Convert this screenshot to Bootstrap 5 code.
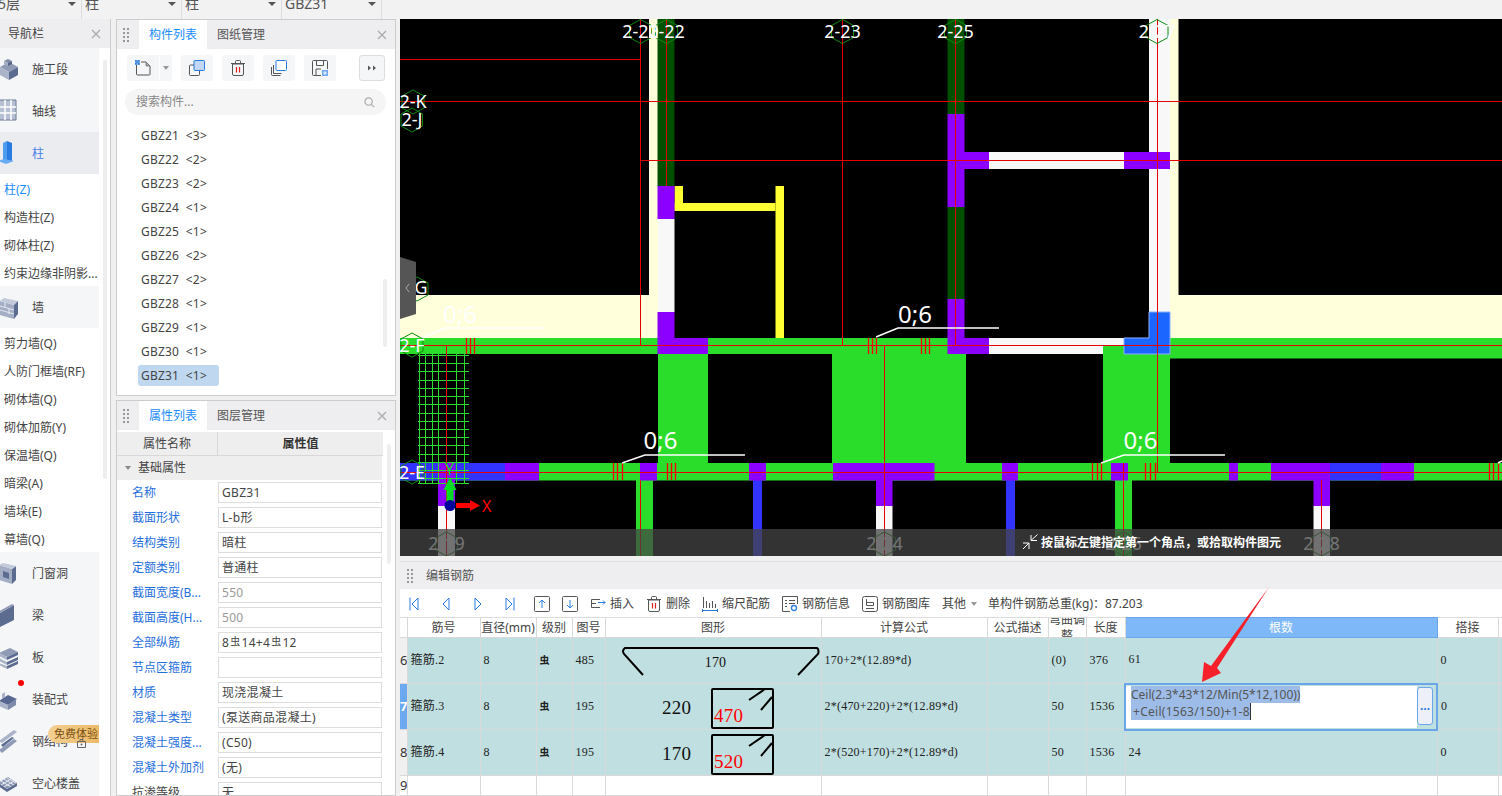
<!doctype html>
<html lang="zh">
<head>
<meta charset="utf-8">
<title>编辑钢筋</title>
<link href="https://cdn.jsdelivr.net/npm/bootstrap@5.3.0/dist/css/bootstrap.min.css" rel="stylesheet">
<style>
html,body{height:796px;overflow:hidden}
body{font-family:"Noto Sans","Noto Sans CJK SC",sans-serif;font-size:12px;color:#444;background:#f0f0f0;line-height:1.3}
.topstrip{height:19px;background:#f2f2f2;overflow:hidden}
.topcell{width:100px;height:19px;line-height:8px;font-size:14px;border-right:1px solid #ddd;padding-left:3px;position:relative;color:#555}
.topcell:first-child{width:82px;padding-left:0;text-indent:-2px}
.topcell::after{content:"";position:absolute;right:5px;top:2px;border:4px solid transparent;border-top:4px solid #555;border-bottom:0}
.mainrow{height:777px}
.navcol{width:112px;background:#fff;border-right:1px solid #ccc;overflow:hidden;position:relative}
.phead{height:29px;background:#eeeef0;flex:none}
.navhead{padding:0 9px 0 8px}
.navlist{width:99px;background:#f5f6f8}
.navrow{height:42px;background:#f5f6f8;color:#444;padding:2px 0 0 32px;position:relative}
.navrow svg{position:absolute;left:-2px;top:8px;width:24px;height:26px}
.navrow.picked{background:#ebecf0;color:#4a80e8}
.navsub{height:28px;padding:3px 0 0 4px;background:#fff;white-space:nowrap;overflow:hidden;color:#444}
.navsub.picked{color:#1a8cff}
.navthumb{position:absolute;left:103px;top:41px;width:4px;height:419px;background:#eee;border-radius:2px}
.reddot{position:absolute;left:18px;top:2px;width:6px;height:6px;border-radius:50%;background:#f00}
.trybadge{position:absolute;left:48px;top:5px;width:51px;height:18px;background:linear-gradient(90deg,#f3cf93,#ecbb68);color:#7a4e10;border-radius:9px 0 0 9px;line-height:18px;font-size:11px;text-align:right;white-space:nowrap;overflow:hidden;padding-right:1px}
.navrow svg.lockglyph{left:77px;top:19px;width:9px;height:9px}
.midcol{width:280px;margin-left:5px;flex:none}
.panelbox{background:#fff;border:1px solid #ccc;overflow:hidden}
.panel1{height:377px}
.panel2{height:396px;margin-top:4px}
.griphandle{width:6px;height:14px;margin:0 10px 0 6px;flex:none}
.ptab{height:29px;line-height:29px;padding:0 10px;color:#555;font-size:12px}
.ptab.picked{background:#fff;color:#1a8cff;width:68px;text-align:center;padding:0}
.xclose{width:10px;height:10px;flex:none}
.toolrow{padding:6px 0 0 10px;height:35px}
.tbtn{width:32px;height:26px;padding:0;background:#f5f6f8;border:0;border-radius:3px;margin-right:9px;display:flex;align-items:center;justify-content:center}
.tbtn svg{width:16px;height:16px}
.tbtn.first{border-radius:3px 0 0 3px;margin-right:1px}
.tbtn.drop{width:12px;border-radius:0 3px 3px 0}
.tbtn.more{width:26px;border:1px solid #ddd;margin-left:14px;margin-right:0}
.drop-tri{border:3px solid transparent;border-top:4px solid #999;border-bottom:0}
.searchbar{margin:5px 9px 0 8px;width:261px;height:26px;border-radius:13px;background:#f5f5f5;color:#888;padding:0 11px}
.searchbar svg{width:11px;height:11px}
.complist{padding-top:9px;margin-left:21px;width:81px}
.complist .list-group-item{height:24px;line-height:24px;padding:0 0 0 3px;background:transparent;border:0;color:#444;white-space:nowrap;letter-spacing:.2px}
.complist .list-group-item.picked{background:#bfd8f0;border-radius:3px;height:21px;line-height:21px;margin:1px 0 2px}
.midthumb{position:absolute;left:266px;top:259px;width:4px;height:68px;background:#eee;border-radius:2px}
.proptable{width:266px}
.prophead{height:24px;background:#eeeeee;border-bottom:1px solid #d8d8d8;margin-top:2px}
.prophead>div:first-child{width:101px;border-right:1px solid #d8d8d8;text-align:center;line-height:24px}
.prophead>div:last-child{flex:1;text-align:center;line-height:24px;color:#333;font-weight:600}
.propsect{height:24px;background:#eeeeee;padding-left:8px;line-height:24px;width:265px;gap:7px}
.sect-tri{border:3px solid transparent;border-top:4px solid #888;border-bottom:0}
.proprow{height:25px}
.proplabel{width:101px;padding-left:15px;color:#1f6fdc;white-space:nowrap;flex:none}
.proplabel.plain{color:#444}
.propval.form-control{width:164px;height:21px;min-height:21px;padding:0 3px;font-size:12px;line-height:19px;border:1px solid #ddd;border-radius:0;color:#444;letter-spacing:.3px;font-family:inherit;background:#fff}
.propval.dimmed{color:#999}
.gr{font-size:10px;position:relative;top:-2px;margin:0 1px}
.propthumb{position:absolute;left:270px;top:43px;width:4px;height:120px;background:#eee;border-radius:2px}
.rightcol{width:1102px;margin-left:4px;flex:none;position:relative}
.cadview{display:block;width:1102px;height:537px;background:#000}
.cadtext{font-family:"Noto Sans","Noto Sans CJK SC",sans-serif}
.editor{margin-top:5px;height:235px;background:#fff;border-top:1px solid #ddd;overflow:hidden}
.edhead{height:27px;background:#eeeef0;color:#555}
.edhead .griphandle{margin:0 13px 0 7px}
.edtools{height:28px;background:#fff;padding:1px 0 0 9px;white-space:nowrap;color:#444}
.eit{display:inline-flex;align-items:center;flex:none}
.eit svg{width:16px;height:16px;margin-right:4px;flex:none}
.nv{width:32px}.nv svg{width:10px;margin:0}
.nv:nth-child(4){width:29px}
.ud{width:28px}.ud svg{margin:0}
.act1{width:56px}.act2{width:56px}.act3{width:80px}.act4{width:80px}.act5{width:80px}
.act6{width:46px;gap:5px}
.mini-tri{border:3px solid transparent;border-top:4px solid #999;border-bottom:0}
.rebar.table{table-layout:fixed;width:1102px;margin:0;border-collapse:collapse;color:#222;font-size:12px;--bs-table-bg:transparent}
.rebar col:nth-child(1){width:7px}.rebar col:nth-child(2){width:73px}.rebar col:nth-child(3){width:56px}.rebar col:nth-child(4){width:36px}
.rebar col:nth-child(5){width:33px}.rebar col:nth-child(6){width:216px}.rebar col:nth-child(7){width:166px}.rebar col:nth-child(8){width:61px}
.rebar col:nth-child(9){width:38px}.rebar col:nth-child(10){width:39px}.rebar col:nth-child(11){width:312px}.rebar col:nth-child(12){width:61px}.rebar col:nth-child(13){width:4px}
.rebar.table>:not(caption)>*>*{padding:0;border:0;border-right:1px solid #d9d9d9;border-bottom:1px solid #d9d9d9;box-shadow:none;vertical-align:middle;overflow:hidden}
.rebar.table>thead>tr>th{height:20px;background:#fff;font-weight:400;text-align:center;color:#444;border-top:1px solid #ddd}
.hcut{height:19px;line-height:16px;display:flex;align-items:center;justify-content:center;overflow:hidden}
.rebar.table>thead>tr>th.colpick{background:#7eb8f8;color:#fff;border:1px solid #6aa6e8}
.rebar.table>tbody>tr>td{height:46px;background:#c0dfe0;padding-left:3px;font-family:"Liberation Serif","Noto Sans CJK SC",serif;white-space:nowrap;letter-spacing:.22px}
.rebar.table>tbody>tr>td.rhd{background:#f0f0f0;padding:0;font-size:13px;text-align:left;color:#333;font-family:"Noto Sans",sans-serif;letter-spacing:0}
.rebar.table>tbody>tr>td.rhd.picked{background:#6aa8f0;color:#fff;font-weight:700}
.rebar.table>tbody>tr.blank>td{height:20px;background:#fff}
.rebar.table>tbody>tr>td.shapecell{padding:0}
.shapecell svg{display:block;width:215px;height:45px}
.shapefont{font-family:"Liberation Serif",serif}
.gradeglyph{font-size:10px;font-weight:600}
.rebar.table>tbody>tr>td.editcell{padding:0;position:relative;border:2px solid #6aa6e8}
.editbox{position:relative;height:42px;background:#fff;margin-right:19px;padding:0 0 0 5px;font-family:"Noto Sans",sans-serif;color:#555;line-height:17px;white-space:nowrap;letter-spacing:0}
.sel{background:#9dbde8}
.lineb{padding-left:2px;letter-spacing:.28px}
.caretbar{border-right:1px solid #333}
.dotbtn{position:absolute;right:3px;top:2px;width:16px;height:38px;background:#edf0f8;border:1px solid #6aa6e8;border-radius:3px;color:#2a7be0;font-weight:700;line-height:32px;text-align:center;padding:0;font-size:12px;font-family:"Noto Sans",sans-serif}
.redarrow{position:absolute;left:0;top:0;width:1102px;height:777px;pointer-events:none}
</style>
</head>
<body>
<div class="topstrip d-flex">
  <div class="topcell">5层</div><div class="topcell">柱</div><div class="topcell">柱</div><div class="topcell">GBZ31</div>
</div>
<div class="mainrow d-flex">
  <aside class="navcol">
    <div class="phead navhead d-flex align-items-center justify-content-between"><span>导航栏</span>
      <svg class="xclose" viewBox="0 0 10 10"><path d="M1 1l8 8M9 1l-8 8" stroke="#aaa" stroke-width="1.2"/></svg></div>
    <div class="navlist">
      <div class="navrow d-flex align-items-center">施工段
        <svg viewBox="0 0 24 26"><path d="M2 11l9-5 9 5-9 5z" fill="#8e9ab6"/><path d="M2 11v8l9 5v-8z" fill="#aab3c8"/><path d="M20 11v8l-9 5v-8z" fill="#5c6b90"/><path d="M6 5l4-2 4 2-4 2z" fill="#7d8aa8"/><path d="M6 5v3l4 2V7z" fill="#a3adc4"/><path d="M14 5v3l-4 2V7z" fill="#566689"/></svg></div>
      <div class="navrow d-flex align-items-center">轴线
        <svg viewBox="0 0 24 26"><path d="M1 2h17v20H1z" fill="#b7bfd2" stroke="#6a7896"/><path d="M7 2v20M13 2v20M1 9h17M1 15h17" stroke="#fff" stroke-width="1.5"/></svg></div>
      <div class="navrow picked d-flex align-items-center">柱
        <svg viewBox="0 0 24 26"><path d="M5 3l4-2v20l-4 2z" fill="#4d9cf0"/><path d="M9 1l5 2v18l-5-0z" fill="#2a7be0"/><path d="M0 21l6-2 10 2-8 3z" fill="#68adf3"/></svg></div>
      <div class="navsub picked d-flex align-items-center">柱(Z)</div>
      <div class="navsub d-flex align-items-center">构造柱(Z)</div>
      <div class="navsub d-flex align-items-center">砌体柱(Z)</div>
      <div class="navsub d-flex align-items-center">约束边缘非阴影...</div>
      <div class="navrow d-flex align-items-center">墙
        <svg viewBox="0 0 24 26"><path d="M2 7l14 4v14L2 21z" fill="#a3adc4"/><path d="M2 7l4-3 14 3-4 4z" fill="#c3cada"/><path d="M16 11l4-4v13l-4 5z" fill="#5c6b90"/><path d="M2 12l14 4M2 16l14 4M7 8v5M11 15v5" stroke="#e6e9f0"/></svg></div>
      <div class="navsub d-flex align-items-center">剪力墙(Q)</div>
      <div class="navsub d-flex align-items-center">人防门框墙(RF)</div>
      <div class="navsub d-flex align-items-center">砌体墙(Q)</div>
      <div class="navsub d-flex align-items-center">砌体加筋(Y)</div>
      <div class="navsub d-flex align-items-center">保温墙(Q)</div>
      <div class="navsub d-flex align-items-center">暗梁(A)</div>
      <div class="navsub d-flex align-items-center">墙垛(E)</div>
      <div class="navsub d-flex align-items-center">幕墙(Q)</div>
      <div class="navrow d-flex align-items-center">门窗洞
        <svg viewBox="0 0 24 26"><path d="M1 5l13 4v15L1 20z" fill="#a3adc4"/><path d="M14 9l4-3v14l-4 4z" fill="#5c6b90"/><path d="M1 5l4-2 13 3-4 3z" fill="#c3cada"/><path d="M5 11l6 2v6l-6-2z" fill="#5c6b90"/></svg></div>
      <div class="navrow d-flex align-items-center">梁
        <svg viewBox="0 0 24 26"><path d="M2 11l14-8v15L2 25z" fill="#5c6b90"/><path d="M2 11l-2-1v14l2 1z" fill="#aab3c8"/><path d="M0 10l14-8 2 1-14 8z" fill="#8e9ab6"/></svg></div>
      <div class="navrow d-flex align-items-center">板
        <svg viewBox="0 0 24 26"><path d="M1 9l11-5 8 4-11 5z" fill="#8e9ab6"/><path d="M1 9v3l8 4v-3zM1 14v3l8 4v-3zM1 19v2l8 4v-3z" fill="#aab3c8"/><path d="M9 13l11-5v3L9 16zM9 18l11-5v3L9 21zM9 22l11-5v3L9 25z" fill="#5c6b90"/></svg></div>
      <div class="navrow d-flex align-items-center">装配式
        <svg viewBox="0 0 24 26"><path d="M1 15l9-6 9 4-9 6z" fill="#56688f"/><path d="M1 15v5l9 4v-5z" fill="#aab3c8"/><path d="M10 19v5l8-5v-6z" fill="#7d8aa8"/><path d="M4 8l3-2v5l-3 2z" fill="#aab3c8"/></svg><span class="reddot"></span></div>
      <div class="navrow d-flex align-items-center">钢结构
        <svg viewBox="0 0 24 26"><path d="M1 13L16 2l3 2L4 15z" fill="#aab3c8"/><path d="M3 17L14 9l2 1-11 9z" fill="#5c6b90"/><path d="M1 22L16 11l3 2L4 25z" fill="#8e9ab6"/></svg>
        <span class="trybadge">免费体验</span>
        <svg class="lockglyph" viewBox="0 0 9 9"><path d="M.5 2.500h8v6h-8z" fill="none" stroke="#666"/><path d="M3 2.500V.5h3v2" fill="none" stroke="#666"/><circle cx="4.500" cy="5.500" r="1" fill="#666"/></svg></div>
      <div class="navrow d-flex align-items-center">空心楼盖
        <svg viewBox="0 0 24 26"><path d="M0 13l10-6 9 6-10 6z" fill="#8e9ab6"/><path d="M3 11l10 6M6 9l10 6M9 8l9 5M3 15l10-6M6 17l10-6" stroke="#e6e9f0"/><path d="M0 13v3l9 6v-3zM9 19v3l10-6v-3z" fill="#5c6b90"/></svg></div>
    </div>
    <div class="navthumb"></div>
  </aside>

  <section class="midcol">
    <div class="panelbox panel1 position-relative">
      <div class="phead d-flex align-items-center">
        <svg class="griphandle" viewBox="0 0 6 14"><path d="M0 0h2v2H0zM4 0h2v2H4zM0 4h2v2H0zM4 4h2v2H4zM0 8h2v2H0zM4 8h2v2H4zM0 12h2v2H0zM4 12h2v2H4z" fill="#999"/></svg>
        <span class="ptab picked">构件列表</span><span class="ptab">图纸管理</span>
        <svg class="xclose ms-auto me-2" viewBox="0 0 10 10"><path d="M1 1l8 8M9 1l-8 8" stroke="#aaa" stroke-width="1.2"/></svg>
      </div>
      <div class="toolrow d-flex">
        <button class="btn tbtn first" type="button"><svg viewBox="0 0 16 16"><path d="M1.500 4v10a1 1 0 0 0 1 1h12a1 1 0 0 0 .5-1V6l-4-4H6" fill="none" stroke="#555"/><path d="M11 2v4h4" fill="#aaa" stroke="#555" stroke-width=".6"/><path d="M0 0h5v5H0z" fill="#7eb0f0"/><path d="M0 0h1.500v1.500H0zM3 0h1.500v1.500H3zM1.500 1.500H3V3H1.500zM0 3h1.500v1.500H0zM3 3h1.500v1.500H3z" fill="#2a7be0"/></svg></button>
        <button class="btn tbtn drop" type="button"><span class="drop-tri"></span></button>
        <button class="btn tbtn" type="button"><svg viewBox="0 0 16 16"><rect x=".5" y="5" width="10" height="10.500" rx="1" fill="none" stroke="#555"/><rect x="5" y=".5" width="10.500" height="10" rx="1" fill="#c2d6f6" stroke="#2a7be0"/></svg></button>
        <button class="btn tbtn" type="button"><svg viewBox="0 0 16 16"><path d="M2.500 4h11v10a1.500 1.500 0 0 1-1.500 1.500H4A1.500 1.500 0 0 1 2.500 14zM1 3.500h14M5.500 3V1.500a1 1 0 0 1 1-1h3a1 1 0 0 1 1 1V3" fill="none" stroke="#555"/><path d="M6.500 7v5.500M9.500 7v5.500" stroke="#e02020" stroke-width="1.200"/></svg></button>
        <button class="btn tbtn" type="button"><svg viewBox="0 0 16 16"><path d="M.5 7v7.500a1 1 0 0 0 1 1h8M2.500 5v8.500h8" fill="none" stroke="#555"/><rect x="5" y=".5" width="10.500" height="10" rx="1" fill="#fff" stroke="#2a7be0"/></svg></button>
        <button class="btn tbtn" type="button"><svg viewBox="0 0 16 16"><path d="M9 15.500H1.500a1 1 0 0 1-1-1v-13a1 1 0 0 1 1-1h13a1 1 0 0 1 1 1V9" fill="none" stroke="#555"/><path d="M4.500 1v4.500h7V1M4 15V9h5" fill="none" stroke="#555"/><path d="M10 10h6v6h-6z" fill="#6ea8f0"/><path d="M11.500 11.500h3v3h-3z" fill="#dce9fb"/></svg></button>
        <button class="btn tbtn more" type="button"><svg viewBox="0 0 16 16"><path d="M4 5.500l3 2.500-3 2.500zM9 5.500l3 2.500-3 2.500z" fill="#555"/></svg></button>
      </div>
      <div class="searchbar d-flex align-items-center justify-content-between"><span>搜索构件...</span>
        <svg viewBox="0 0 12 12"><circle cx="5" cy="5" r="4" fill="none" stroke="#aaa" stroke-width="1.300"/><path d="M8 8l3 3" stroke="#aaa" stroke-width="1.300"/></svg></div>
      <div class="list-group list-group-flush complist">
        <div class="list-group-item">GBZ21&nbsp; &lt;3&gt;</div>
        <div class="list-group-item">GBZ22&nbsp; &lt;2&gt;</div>
        <div class="list-group-item">GBZ23&nbsp; &lt;2&gt;</div>
        <div class="list-group-item">GBZ24&nbsp; &lt;1&gt;</div>
        <div class="list-group-item">GBZ25&nbsp; &lt;1&gt;</div>
        <div class="list-group-item">GBZ26&nbsp; &lt;2&gt;</div>
        <div class="list-group-item">GBZ27&nbsp; &lt;2&gt;</div>
        <div class="list-group-item">GBZ28&nbsp; &lt;1&gt;</div>
        <div class="list-group-item">GBZ29&nbsp; &lt;1&gt;</div>
        <div class="list-group-item">GBZ30&nbsp; &lt;1&gt;</div>
        <div class="list-group-item picked">GBZ31&nbsp; &lt;1&gt;</div>
      </div>
      <div class="midthumb"></div>
    </div>
    <div class="panelbox panel2 position-relative">
      <div class="phead d-flex align-items-center">
        <svg class="griphandle" viewBox="0 0 6 14"><path d="M0 0h2v2H0zM4 0h2v2H4zM0 4h2v2H0zM4 4h2v2H4zM0 8h2v2H0zM4 8h2v2H4zM0 12h2v2H0zM4 12h2v2H4z" fill="#999"/></svg>
        <span class="ptab picked">属性列表</span><span class="ptab">图层管理</span>
        <svg class="xclose ms-auto me-2" viewBox="0 0 10 10"><path d="M1 1l8 8M9 1l-8 8" stroke="#aaa" stroke-width="1.2"/></svg>
      </div>
      <div class="proptable">
        <div class="prophead d-flex"><div>属性名称</div><div>属性值</div></div>
        <div class="propsect d-flex align-items-center"><span class="sect-tri"></span>基础属性</div>
        <div class="proprow d-flex align-items-center"><div class="proplabel">名称</div><div class="form-control propval">GBZ31</div></div>
        <div class="proprow d-flex align-items-center"><div class="proplabel">截面形状</div><div class="form-control propval">L-b形</div></div>
        <div class="proprow d-flex align-items-center"><div class="proplabel">结构类别</div><div class="form-control propval">暗柱</div></div>
        <div class="proprow d-flex align-items-center"><div class="proplabel">定额类别</div><div class="form-control propval">普通柱</div></div>
        <div class="proprow d-flex align-items-center"><div class="proplabel">截面宽度(B...</div><div class="form-control propval dimmed">550</div></div>
        <div class="proprow d-flex align-items-center"><div class="proplabel">截面高度(H...</div><div class="form-control propval dimmed">500</div></div>
        <div class="proprow d-flex align-items-center"><div class="proplabel">全部纵筋</div><div class="form-control propval">8<span class="gr">虫</span>14+4<span class="gr">虫</span>12</div></div>
        <div class="proprow d-flex align-items-center"><div class="proplabel">节点区箍筋</div><div class="form-control propval"></div></div>
        <div class="proprow d-flex align-items-center"><div class="proplabel">材质</div><div class="form-control propval">现浇混凝土</div></div>
        <div class="proprow d-flex align-items-center"><div class="proplabel">混凝土类型</div><div class="form-control propval">(泵送商品混凝土)</div></div>
        <div class="proprow d-flex align-items-center"><div class="proplabel">混凝土强度...</div><div class="form-control propval">(C50)</div></div>
        <div class="proprow d-flex align-items-center"><div class="proplabel">混凝土外加剂</div><div class="form-control propval">(无)</div></div>
        <div class="proprow d-flex align-items-center"><div class="proplabel plain">抗渗等级</div><div class="form-control propval">无</div></div>
      </div>
      <div class="propthumb"></div>
    </div>
  </section>

  <main class="rightcol">
    <svg class="cadview" viewBox="400 19 1102 537">
      <rect x="400" y="19" width="1102" height="537" fill="#000"/>
      <g fill="#ffffdc">
        <rect x="400" y="295" width="249" height="43"/><rect x="649" y="19" width="9" height="319"/>
        <rect x="1170" y="19" width="8.500" height="276"/><rect x="1170" y="295" width="332" height="43"/>
      </g>
      <g fill="#2bdd2b">
        <rect x="400" y="338" width="258" height="16"/><rect x="708" y="338" width="240" height="16"/>
        <rect x="1170" y="338" width="332" height="20.500"/>
        <rect x="1103" y="345" width="21" height="9"/>
        <rect x="658" y="354" width="50" height="109"/><rect x="832" y="354" width="134" height="109"/><rect x="1103" y="354" width="67" height="109"/>
        <rect x="400" y="463" width="1102" height="17.500"/>
        <rect x="636" y="480" width="17" height="76"/><rect x="1115" y="480" width="17" height="76"/>
      </g>
      <g fill="#005000"><rect x="657.500" y="19" width="17" height="167"/><rect x="947.500" y="19" width="17" height="95"/><rect x="947.500" y="207" width="17" height="93"/></g>
      <g fill="#f8f8f8">
        <rect x="658" y="219" width="16.500" height="93"/><rect x="1149" y="19" width="21" height="293"/>
        <rect x="989" y="152" width="135" height="17"/><rect x="989" y="338" width="135" height="7"/><rect x="989" y="345" width="114" height="9"/>
        <rect x="438" y="506" width="17" height="50"/><rect x="876" y="506" width="16.500" height="50"/><rect x="1313.500" y="506" width="16.500" height="50"/>
      </g>
      <g fill="#ffff33"><rect x="674.500" y="186" width="8.500" height="25"/><rect x="674.500" y="203" width="101" height="8"/><rect x="775.500" y="186" width="8.500" height="152"/></g>
      <g fill="#3333ff">
        <rect x="400" y="463" width="105" height="17.500"/><rect x="1330" y="463" width="51" height="17.500"/>
        <rect x="753" y="480" width="9" height="76"/><rect x="1006" y="480" width="9" height="76"/>
      </g>
      <g fill="#8c00ff">
        <rect x="657.500" y="186" width="17" height="33"/>
        <path d="M657.500 312h17v26h33.500v16h-50.500z"/>
        <path d="M947.500 114h17v38h24.500v17h-24.500v38h-17z"/>
        <rect x="1124" y="152" width="46" height="17"/>
        <path d="M947.500 299h17v39h24.500v16h-41.500z"/>
        <path d="M438 463h17v43h-17z"/><rect x="505" y="463" width="34" height="17.500"/>
        <rect x="640" y="463" width="17" height="17.500"/><rect x="749" y="463" width="17" height="17.500"/>
        <rect x="833" y="463" width="101.500" height="17.500"/><rect x="876" y="480" width="16.500" height="26"/>
        <rect x="1002" y="463" width="16" height="17.500"/><rect x="1111" y="463" width="17" height="17.500"/>
        <rect x="1229" y="463" width="9" height="17.500"/>
        <rect x="1271" y="463" width="59" height="17.500"/><rect x="1313.500" y="480" width="16.500" height="26"/>
        <rect x="1381" y="463" width="33" height="17.500"/>
      </g>
      <path d="M1149 312h21v42h-46v-16h25z" fill="#1a66ff" stroke="#8ab0ff" stroke-width="1"/>
      <path d="M419.500 354v130M425.500 354v130M432.500 354v130M438.500 354v130M446.500 354v130M456.500 354v130M464.500 354v130M418 355.500h51M418 363.500h51M418 371.500h51M418 380.500h51M418 388.500h51M418 396.500h51M418 404.500h51M418 413.500h51M418 421.500h51M418 429.500h51M418 437.500h51M418 445.500h51M418 454.500h51M418 462.500h51M418 470.500h51M418 478.500h51M418 483.500h51" stroke="#2bdd2b" stroke-width="1" fill="none"/>
      <g stroke="#e60000" stroke-width="1" fill="none">
        <path d="M400 59.500h240.500M400 101.500h1102M640.500 160.500h861.500M400 345.500h1102M400 472.500h1102"/>
        <path d="M640.500 19v326M666.500 19v167M842.500 19v326M955.500 19v326M1157.500 19v453M446.500 345v211M884.500 345v211M640.500 480v76M1123.500 463v93M1321.500 480v76"/>
      </g>
      <path d="M466.500 338v16M470.500 338v16M474.500 338v16M868.500 338v16M872.500 338v16M876.500 338v16M921.500 338v16M925.500 338v16M929.500 338v16M613.500 463v17M617.500 463v17M622.500 463v17M667.500 463v17M671.500 463v17M675.500 463v17M1092.500 463v17M1097.500 463v17M1101.500 463v17M1145.500 463v17M1150.500 463v17M1155.500 463v17M1489.500 463v17M1493.500 463v17M1498.500 463v17" stroke="#f00" stroke-width="1.300"/>
      <path d="M422 338l23-10h100M876 337l22-9h101M622 463l23-8h100M1101 463l23-8h101M1498 463l4-2" stroke="#fff" stroke-width="1.500" fill="none"/>
      <g class="cadtext" fill="#fff" font-size="24">
        <text x="443" y="323">0;6</text><text x="898" y="323">0;6</text><text x="643.500" y="449">0;6</text><text x="1123.500" y="449">0;6</text>
      </g>
      <g fill="none" stroke="#0f8a0f" stroke-width="1">
        <path d="M640.500 19.500l11 6v12l-11 6-11-6v-12zM666.500 19.500l11 6v12l-11 6-11-6v-12zM842.500 19.500l11 6v12l-11 6-11-6v-12zM955.500 19.500l11 6v12l-11 6-11-6v-12zM1157 19.500l11 6v12l-11 6-11-6v-12z"/>
        <path d="M413 90l11 6v12l-11 6-11-6V96zM412 108l10.500 6v12l-10.500 6-11-6v-12zM417 277l11 6v12l-11 6-11-6v-12zM412 333l11 6v12l-11 6-11-6v-12zM412 460l11 6v12l-11 6-11-6v-12z"/>
        <path d="M446.500 532l11 6v12l-11 6-11-6v-12zM884.500 532l11 6v12l-11 6-11-6v-12zM1123.500 532l11 6v12l-11 6-11-6v-12zM1321.500 532l11 6v12l-11 6-11-6v-12z"/>
      </g>
      <g class="cadtext" fill="#fff" font-size="18" text-anchor="middle">
        <text x="640.500" y="38">2-20</text><text x="666.500" y="38">2-22</text><text x="842.500" y="38">2-23</text><text x="955.500" y="38">2-25</text><text x="1157" y="38">2-27</text>
        <text x="413" y="108">2-K</text><text x="412" y="126">2-J</text><text x="421" y="294">G</text><text x="412" y="352">2-F</text><text x="412" y="479">2-E</text>
        <text x="446.500" y="550">2-19</text><text x="884.500" y="550">2-24</text><text x="1123.500" y="550">2-26</text><text x="1321.500" y="550">2-28</text>
      </g>
      <path d="M446.500 505v-15h-3l6.500-13 6.500 13h-3v15z" fill="#00dd22"/>
      <path d="M456 503h14v-3l10 5.500-10 5.500v-3h-14z" fill="#f00"/>
      <circle cx="450" cy="505.500" r="5.500" fill="#00009c"/>
      <g class="cadtext" font-size="16"><text x="445" y="475" fill="#00dd22">Y</text><text x="482" y="512" fill="#f00">X</text></g>
      <path d="M400 257l16 5v52l-16 5z" fill="#555"/>
      <path d="M409 284l-3 4 3 4" stroke="#aaa" fill="none"/>
      <rect x="400" y="529" width="1102" height="27" fill="#444" fill-opacity=".75"/>
      <path d="M1037.500 534.500l-6.500 6M1031 535v5.500h6M1023 549l6-6M1023 543h6v6" stroke="#fff" fill="none" stroke-width="1"/>
      <text class="cadtext" x="1041" y="547" fill="#fff" font-size="12" font-weight="600">按鼠标左键指定第一个角点，或拾取构件图元</text>
    </svg>

    <div class="editor">
      <div class="edhead d-flex align-items-center">
        <svg class="griphandle" viewBox="0 0 6 14"><path d="M0 0h2v2H0zM4 0h2v2H4zM0 4h2v2H0zM4 4h2v2H4zM0 8h2v2H0zM4 8h2v2H4zM0 12h2v2H0zM4 12h2v2H4z" fill="#999"/></svg>
        <span>编辑钢筋</span>
      </div>
      <div class="edtools d-flex align-items-center">
        <span class="eit nv"><svg viewBox="0 0 10 16"><path d="M1 1.500v13M9 2L3 8l6 6z" fill="none" stroke="#2a7be0"/></svg></span>
        <span class="eit nv"><svg viewBox="0 0 10 16"><path d="M8 2L2 8l6 6z" fill="none" stroke="#2a7be0"/></svg></span>
        <span class="eit nv"><svg viewBox="0 0 10 16"><path d="M2 2l6 6-6 6z" fill="none" stroke="#2a7be0"/></svg></span>
        <span class="eit nv"><svg viewBox="0 0 10 16"><path d="M9 1.500v13M1 2l6 6-6 6z" fill="none" stroke="#2a7be0"/></svg></span>
        <span class="eit ud"><svg viewBox="0 0 16 16"><rect x=".5" y=".5" width="15" height="15" rx="1" fill="none" stroke="#555"/><path d="M8 12V4M5 7l3-3 3 3" fill="none" stroke="#2a7be0"/></svg></span>
        <span class="eit ud"><svg viewBox="0 0 16 16"><rect x=".5" y=".5" width="15" height="15" rx="1" fill="none" stroke="#555"/><path d="M8 4v8M5 9l3 3 3-3" fill="none" stroke="#2a7be0"/></svg></span>
        <span class="eit act1"><svg viewBox="0 0 16 16"><path d="M10 3.500H1.500v8H10M1.500 7.500H6" fill="none" stroke="#555"/><path d="M8 6.500h7M13 4.500l2 2-2 2" fill="none" stroke="#2a7be0"/></svg>插入</span>
        <span class="eit act2"><svg viewBox="0 0 16 16"><path d="M2.500 4h11v10a1.500 1.500 0 0 1-1.500 1.500H4A1.500 1.500 0 0 1 2.500 14zM1 3.500h14M5.500 3V1.500a1 1 0 0 1 1-1h3a1 1 0 0 1 1 1V3" fill="none" stroke="#555"/><path d="M6.500 7v5.500M9.500 7v5.500" stroke="#e02020" stroke-width="1.200"/></svg>删除</span>
        <span class="eit act3"><svg viewBox="0 0 16 16"><path d="M1.500 1v11M4.500 5v7M7.500 7v5M10.500 5v7M13.500 8v4" stroke="#555" fill="none"/><path d="M.5 14.500h15M.5 13v3M15.500 13v3" stroke="#2a7be0" fill="none"/></svg>缩尺配筋</span>
        <span class="eit act4"><svg viewBox="0 0 16 16"><path d="M15.500 8V.5H.5v15H8" fill="none" stroke="#555"/><path d="M3 4.500h2M7 4.500h6M3 7.500h2M7 7.500h6M3 10.500h2" stroke="#555"/><circle cx="12" cy="12" r="2.500" fill="none" stroke="#2a7be0" stroke-width="1.300"/></svg>钢筋信息</span>
        <span class="eit act5"><svg viewBox="0 0 16 16"><rect x=".5" y=".5" width="15" height="15" rx="2" fill="none" stroke="#555"/><path d="M4.500 3v6.500h7V6.500h-7M4 12.500h8" fill="none" stroke="#555"/></svg>钢筋图库</span>
        <span class="eit act6">其他<span class="mini-tri"></span></span>
        <span class="eit">单构件钢筋总重(kg)：87.203</span>
      </div>
      <table class="table rebar">
        <colgroup><col><col><col><col><col><col><col><col><col><col><col><col><col></colgroup>
        <thead><tr>
          <th></th><th>筋号</th><th>直径(mm)</th><th>级别</th><th>图号</th><th>图形</th><th>计算公式</th><th>公式描述</th><th><div class="hcut">弯曲调整</div></th><th>长度</th><th class="colpick">根数</th><th>搭接</th><th></th>
        </tr></thead>
        <tbody>
          <tr>
            <td class="rhd">6</td><td>箍筋.2</td><td>8</td><td><span class="gradeglyph">虫</span></td><td>485</td>
            <td class="shapecell"><svg viewBox="605 637 215 45"><path d="M642 674l-19-21q-2-3 0-5l1-1h192l1 1q1 3 0 5l-20 21" fill="none" stroke="#000" stroke-width="2"/><text class="shapefont" x="714.500" y="666" font-size="14" text-anchor="middle" fill="#111">170</text></svg></td>
            <td>170+2*(12.89*d)</td><td></td><td>(0)</td><td>376</td><td>61</td><td>0</td><td></td>
          </tr>
          <tr>
            <td class="rhd picked">7</td><td>箍筋.3</td><td>8</td><td><span class="gradeglyph">虫</span></td><td>195</td>
            <td class="shapecell"><svg viewBox="605 683 215 45"><rect x="711" y="688" width="61" height="39" rx="1" fill="none" stroke="#000" stroke-width="2"/><path d="M748 699l16-11M760 709l11-13" stroke="#000" stroke-width="2"/><text class="shapefont" x="661" y="713" font-size="19" fill="#111">220</text><text class="shapefont" x="713" y="721" font-size="19" fill="#f00">470</text></svg></td>
            <td>2*(470+220)+2*(12.89*d)</td><td></td><td>50</td><td>1536</td>
            <td class="editcell"><div class="editbox"><span class="sel">Ceil(2.3*43*12/Min(5*12,100))</span><br><span class="sel caretbar lineb">+Ceil(1563/150)+1-8</span></div><button class="btn dotbtn" type="button">...</button></td>
            <td>0</td><td></td>
          </tr>
          <tr>
            <td class="rhd">8</td><td>箍筋.4</td><td>8</td><td><span class="gradeglyph">虫</span></td><td>195</td>
            <td class="shapecell"><svg viewBox="605 729 215 45"><rect x="711" y="734" width="61" height="39" rx="1" fill="none" stroke="#000" stroke-width="2"/><path d="M748 745l16-11M760 755l11-13" stroke="#000" stroke-width="2"/><text class="shapefont" x="661" y="759" font-size="19" fill="#111">170</text><text class="shapefont" x="713" y="767" font-size="19" fill="#f00">520</text></svg></td>
            <td>2*(520+170)+2*(12.89*d)</td><td></td><td>50</td><td>1536</td><td>24</td><td>0</td><td></td>
          </tr>
          <tr class="blank"><td class="rhd">9</td><td></td><td></td><td></td><td></td><td></td><td></td><td></td><td></td><td></td><td></td><td></td><td></td></tr>
        </tbody>
      </table>
    </div>
    <svg class="redarrow" viewBox="400 19 1102 777"><path d="M1269 587L1217 668l4 5-19 9 2-20 7 4z" fill="#f5202a"/></svg>
  </main>
</div>
<script src="https://cdn.jsdelivr.net/npm/bootstrap@5.3.0/dist/js/bootstrap.bundle.min.js"></script>
</body>
</html>
